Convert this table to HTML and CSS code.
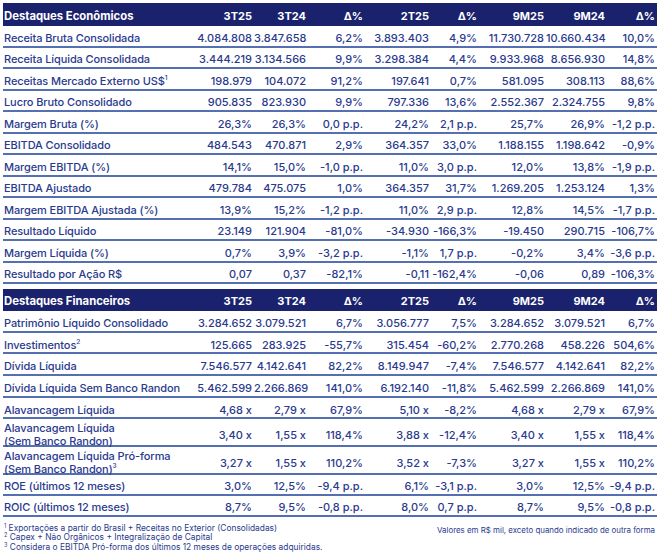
FILE: index.html
```html
<!DOCTYPE html>
<html lang="pt-BR">
<head>
<meta charset="utf-8">
<link rel="stylesheet" href="styles.css">
</head>
<body>
<div class="report">
  <section class="sec sec-eco">
    <div class="row head"><span class="lbl">Destaques Econômicos</span><span>3T25</span><span>3T24</span><span>Δ%</span><span>2T25</span><span>Δ%</span><span>9M25</span><span>9M24</span><span>Δ%</span></div>
    <div class="row"><span class="lbl">Receita Bruta Consolidada</span><span>4.084.808</span><span>3.847.658</span><span>6,2%</span><span>3.893.403</span><span>4,9%</span><span>11.730.728</span><span>10.660.434</span><span>10,0%</span></div>
    <div class="row"><span class="lbl">Receita Líquida Consolidada</span><span>3.444.219</span><span>3.134.566</span><span>9,9%</span><span>3.298.384</span><span>4,4%</span><span>9.933.968</span><span>8.656.930</span><span>14,8%</span></div>
    <div class="row"><span class="lbl">Receitas Mercado Externo US$<sup>1</sup></span><span>198.979</span><span>104.072</span><span>91,2%</span><span>197.641</span><span>0,7%</span><span>581.095</span><span>308.113</span><span>88,6%</span></div>
    <div class="row"><span class="lbl">Lucro Bruto Consolidado</span><span>905.835</span><span>823.930</span><span>9,9%</span><span>797.336</span><span>13,6%</span><span>2.552.367</span><span>2.324.755</span><span>9,8%</span></div>
    <div class="row"><span class="lbl">Margem Bruta (%)</span><span>26,3%</span><span>26,3%</span><span>0,0 p.p.</span><span>24,2%</span><span>2,1 p.p.</span><span>25,7%</span><span>26,9%</span><span>-1,2 p.p.</span></div>
    <div class="row"><span class="lbl">EBITDA Consolidado</span><span>484.543</span><span>470.871</span><span>2,9%</span><span>364.357</span><span>33,0%</span><span>1.188.155</span><span>1.198.642</span><span>-0,9%</span></div>
    <div class="row"><span class="lbl">Margem EBITDA (%)</span><span>14,1%</span><span>15,0%</span><span>-1,0 p.p.</span><span>11,0%</span><span>3,0 p.p.</span><span>12,0%</span><span>13,8%</span><span>-1,9 p.p.</span></div>
    <div class="row"><span class="lbl">EBITDA Ajustado</span><span>479.784</span><span>475.075</span><span>1,0%</span><span>364.357</span><span>31,7%</span><span>1.269.205</span><span>1.253.124</span><span>1,3%</span></div>
    <div class="row"><span class="lbl">Margem EBITDA Ajustada (%)</span><span>13,9%</span><span>15,2%</span><span>-1,2 p.p.</span><span>11,0%</span><span>2,9 p.p.</span><span>12,8%</span><span>14,5%</span><span>-1,7 p.p.</span></div>
    <div class="row"><span class="lbl">Resultado Líquido</span><span>23.149</span><span>121.904</span><span>-81,0%</span><span>-34.930</span><span>-166,3%</span><span>-19.450</span><span>290.715</span><span>-106,7%</span></div>
    <div class="row"><span class="lbl">Margem Líquida (%)</span><span>0,7%</span><span>3,9%</span><span>-3,2 p.p.</span><span>-1,1%</span><span>1,7 p.p.</span><span>-0,2%</span><span>3,4%</span><span>-3,6 p.p.</span></div>
    <div class="row"><span class="lbl">Resultado por Ação R$</span><span>0,07</span><span>0,37</span><span>-82,1%</span><span>-0,11</span><span>-162,4%</span><span>-0,06</span><span>0,89</span><span>-106,3%</span></div>
  </section>

  <section class="sec sec-fin">
    <div class="row head"><span class="lbl">Destaques Financeiros</span><span>3T25</span><span>3T24</span><span>Δ%</span><span>2T25</span><span>Δ%</span><span>9M25</span><span>9M24</span><span>Δ%</span></div>
    <div class="row"><span class="lbl">Patrimônio Líquido Consolidado</span><span>3.284.652</span><span>3.079.521</span><span>6,7%</span><span>3.056.777</span><span>7,5%</span><span>3.284.652</span><span>3.079.521</span><span>6,7%</span></div>
    <div class="row"><span class="lbl">Investimentos<sup>2</sup></span><span>125.665</span><span>283.925</span><span>-55,7%</span><span>315.454</span><span>-60,2%</span><span>2.770.268</span><span>458.226</span><span>504,6%</span></div>
    <div class="row"><span class="lbl">Dívida Líquida</span><span>7.546.577</span><span>4.142.641</span><span>82,2%</span><span>8.149.947</span><span>-7,4%</span><span>7.546.577</span><span>4.142.641</span><span>82,2%</span></div>
    <div class="row"><span class="lbl">Dívida Líquida Sem Banco Randon</span><span>5.462.599</span><span>2.266.869</span><span>141,0%</span><span>6.192.140</span><span>-11,8%</span><span>5.462.599</span><span>2.266.869</span><span>141,0%</span></div>
    <div class="row"><span class="lbl">Alavancagem Líquida</span><span>4,68 x</span><span>2,79 x</span><span>67,9%</span><span>5,10 x</span><span>-8,2%</span><span>4,68 x</span><span>2,79 x</span><span>67,9%</span></div>
    <div class="row tall"><span class="lbl">Alavancagem Líquida<br>(Sem Banco Randon)</span><span>3,40 x</span><span>1,55 x</span><span>118,4%</span><span>3,88 x</span><span>-12,4%</span><span>3,40 x</span><span>1,55 x</span><span>118,4%</span></div>
    <div class="row tall"><span class="lbl">Alavancagem Líquida Pró-forma<br>(Sem Banco Randon)<sup>3</sup></span><span>3,27 x</span><span>1,55 x</span><span>110,2%</span><span>3,52 x</span><span>-7,3%</span><span>3,27 x</span><span>1,55 x</span><span>110,2%</span></div>
    <div class="row short"><span class="lbl">ROE (últimos 12 meses)</span><span>3,0%</span><span>12,5%</span><span>-9,4 p.p.</span><span>6,1%</span><span>-3,1 p.p.</span><span>3,0%</span><span>12,5%</span><span>-9,4 p.p.</span></div>
    <div class="row short"><span class="lbl">ROIC (últimos 12 meses)</span><span>8,7%</span><span>9,5%</span><span>-0,8 p.p.</span><span>8,0%</span><span>0,7 p.p.</span><span>8,7%</span><span>9,5%</span><span>-0,8 p.p.</span></div>
  </section>

  <footer class="notes">
    <ul class="fn">
      <li><sup>1</sup> Exportações a partir do Brasil + Receitas no Exterior (Consolidadas)</li>
      <li><sup>2</sup> Capex + Não Orgânicos + Integralização de Capital</li>
      <li><sup>3</sup> Considera o EBITDA Pró-forma dos últimos 12 meses de operações adquiridas.</li>
    </ul>
    <p class="unit">Valores em R$ mil, exceto quando indicado de outra forma</p>
  </footer>
</div>
</body>
</html>
```

FILE: styles.css
```css
* { box-sizing: border-box; }

html, body {
  margin: 0;
  padding: 0;
  background: #ffffff;
}

body {
  font-family: Inter, "Noto Sans", "Liberation Sans", sans-serif;
  color: #2a3a8e;
  font-size: 11px;
  font-weight: 500;
}

.report {
  width: 660px;
  padding: 3px 3px 0 3px;
}

.sec {
  display: flex;
  flex-direction: column;
}

.sec-fin {
  margin-top: 5px;
}

.row {
  display: grid;
  grid-template-columns: 192px 59px 54px 57px 66px 48px 67px 61px 50px;
  align-items: center;
  height: 21.5px;
  padding-top: 4px;
  border-bottom: 2px solid #5570b2;
  white-space: nowrap;
}

.sec-fin .row {
  height: 21.7px;
}

.row > span {
  text-align: right;
  padding-right: 2px;
}

.row > .lbl {
  text-align: left;
  padding-left: 1px;
  letter-spacing: -0.1px;
}

.sec .row.head {
  height: 23px;
  padding-top: 2px;
  background: #1a226d;
  color: #ffffff;
  font-weight: 700;
  border-bottom: none;
}

.row.head > .lbl {
  font-size: 11.3px;
  letter-spacing: 0;
}

.sec-fin .row.head {
  height: 22px;
}

.sec .row.tall {
  height: 27.6px;
  padding-top: 3px;
}

.sec .row.short {
  height: 21px;
}

.row.tall > .lbl {
  line-height: 13px;
}

sup {
  font-size: 6.5px;
  line-height: 0;
  vertical-align: 5px;
}

.notes {
  display: flex;
  justify-content: space-between;
  align-items: flex-start;
  padding-top: 7px;
  font-weight: 400;
}

.fn {
  list-style: none;
  margin: 0;
  padding: 0 0 0 1px;
  font-size: 8.4px;
  line-height: 9.5px;
}

.fn sup {
  font-size: 5.5px;
  vertical-align: 3px;
}

.unit {
  margin: 2px 2px 0 0;
  font-size: 7.9px;
  line-height: 9.5px;
}
```
